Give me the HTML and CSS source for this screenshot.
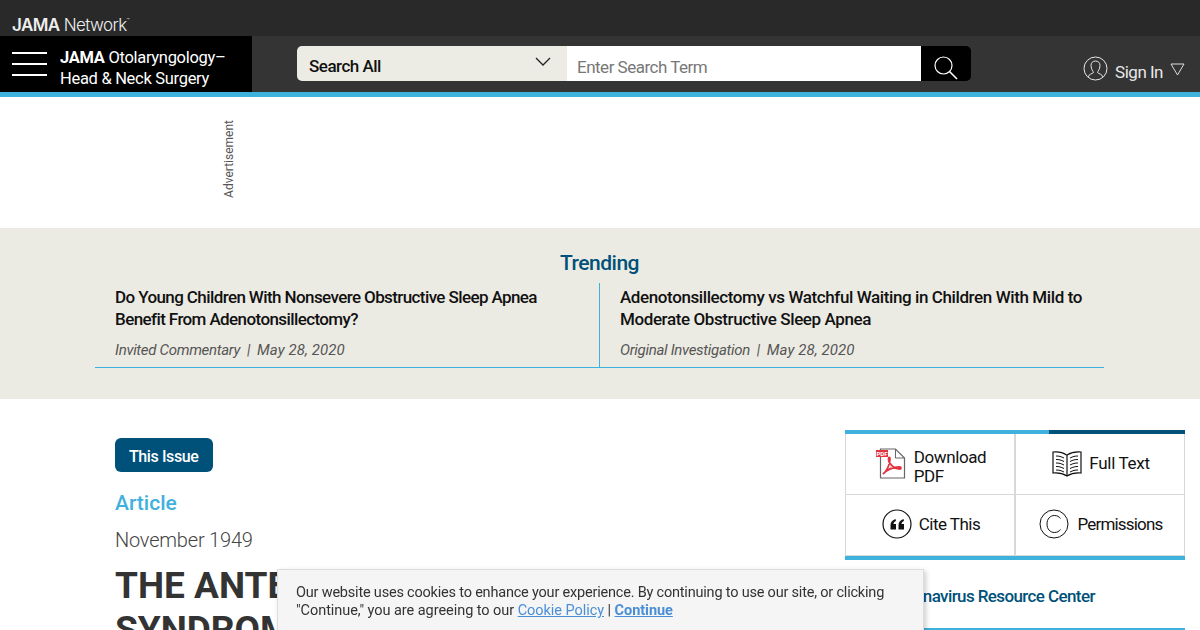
FILE: index.html
```html
<!DOCTYPE html>
<html lang="en">

<head>
    <meta charset="UTF-8">
    <meta name="viewport" content="width=device-width, initial-scale=1.0">
    <title>The Anterior Syndrome</title>
    <link rel="stylesheet" href="styles.css">
</head>

<body>
    <div class="network-bar">
        <div class="network-logo"><b>JAMA</b> Network<sup>™</sup></div>
    </div>

    <header class="site-header">
        <div class="journal">
            <div class="burger"><span></span><span></span><span></span></div>
            <div class="journal-name"><b>JAMA</b> Otolaryngology–<br>Head &amp; Neck Surgery</div>
        </div>
        <form class="search">
            <div class="search-select">
                <span>Search All</span>
                <svg width="16" height="10" viewBox="0 0 16 10"><path d="M1 1l7 7 7-7" fill="none" stroke="#222" stroke-width="1.3"/></svg>
            </div>
            <div class="search-input">Enter Search Term</div>
            <div class="search-btn">
                <svg width="24" height="24" viewBox="0 0 24 24" fill="none" stroke="#fff" stroke-width="1.2"><circle cx="9.5" cy="9.5" r="8.5"/><path d="M15.5 15.5l7.5 7.5" stroke-width="1.6"/></svg>
            </div>
        </form>
        <div class="sign-in">
            <svg width="25" height="25" viewBox="0 0 25 25" fill="none" stroke="#e8e8e8" stroke-width="1"><circle cx="12.5" cy="12.5" r="11.5"/><path d="M5 21c1-3 4-3 5.500-4.500 0-1-2.500-3-2.500-7 0-3 2-4.500 4.500-4.500s4.500 1.500 4.500 4.500c0 4-2.500 6-2.500 7 1.500 1.500 4.500 1.500 5.500 4.500"/></svg>
            <span>Sign In</span>
            <svg class="caret" width="15" height="13" viewBox="0 0 15 13" fill="none" stroke="#ddd" stroke-width="1"><path d="M1 1h13L7.500 12z"/></svg>
        </div>
    </header>

    <div class="ad-strip">
        <div class="ad-label">Advertisement</div>
    </div>

    <section class="trending">
        <h2>Trending</h2>
        <div class="trending-list">
            <div class="trending-item">
                <a href="#">Do Young Children With Nonsevere Obstructive Sleep Apnea Benefit From Adenotonsillectomy?</a>
                <p>Invited Commentary &nbsp;|&nbsp; <time>May 28, 2020</time></p>
            </div>
            <div class="trending-item">
                <a href="#">Adenotonsillectomy vs Watchful Waiting in Children With Mild to Moderate Obstructive Sleep Apnea</a>
                <p>Original Investigation &nbsp;|&nbsp; <time>May 28, 2020</time></p>
            </div>
        </div>
    </section>

    <main class="content">
        <article class="article">
            <a class="issue-btn" href="#">This Issue</a>
            <div class="article-type">Article</div>
            <div class="article-date">November 1949</div>
            <h1>THE ANTERIOR<br>SYNDROME</h1>
        </article>

        <aside class="sidebar">
            <div class="tools">
                <a class="tool tool-pdf" href="#">
                    <svg width="30" height="31" viewBox="0 0 30 31">
                        <path d="M4.500 1h15l9 9v20h-24z" fill="#fff" stroke="#666" stroke-width="1.200"/>
                        <path d="M19.500 1v9h9" fill="none" stroke="#666" stroke-width="1"/>
                        <rect x="0" y="2" width="12" height="7" fill="#e2333f"/>
                        <text class="pdf-tag" x="6" y="7.500" text-anchor="middle">PDF</text>
                        <path d="M7 26c4-3 7-10 7-15 0-2-1.500-2-1.500 0 0 5 6 10 11 10 2 0 2-2 0-2-5 0-12 2-16.500 7z" fill="none" stroke="#e2333f" stroke-width="1.800"/>
                    </svg>
                    <span>Download<br>PDF</span>
                </a>
                <a class="tool" href="#">
                    <svg width="30" height="27" viewBox="0 0 30 27" fill="none" stroke="#111" stroke-width="1.200">
                        <path d="M14.500 5C11 2.500 6 1.500 1 2v21c5-.5 10 .5 14 3 4-2.500 9-3.500 14-3V2c-5-.5-10 .5-14 3v21"/>
                        <path d="M4 6c3 0 5 .5 8 2M4 9.500c3 0 5 .5 8 2M4 13c3 0 5 .5 8 2M4 16.500c3 0 5 .5 8 2M4 20c3 0 5 .5 8 2M26 6c-3 0-5 .5-8 2M26 9.500c-3 0-5 .5-8 2M26 13c-3 0-5 .5-8 2M26 16.500c-3 0-5 .5-8 2M26 20c-3 0-5 .5-8 2" stroke-width="1"/>
                    </svg>
                    <span>Full Text</span>
                </a>
                <a class="tool tool-cite" href="#">
                    <svg width="30" height="30" viewBox="0 0 30 30">
                        <circle cx="15" cy="15" r="14" fill="none" stroke="#111" stroke-width="1.200"/>
                        <path d="M13.500 10c-3 1-5 3-5 6v4.500h5.500V15h-2.500c0-1.500 1-2.500 2.500-3zM21.500 10c-3 1-5 3-5 6v4.500H22V15h-2.500c0-1.500 1-2.500 2.500-3z" fill="#111"/>
                    </svg>
                    <span>Cite This</span>
                </a>
                <a class="tool tool-wide" href="#">
                    <svg width="30" height="30" viewBox="0 0 30 30" fill="none" stroke="#111" stroke-width="1">
                        <circle cx="15" cy="15" r="14"/>
                        <path d="M21.500 9.500C20 7.500 18 6.500 15.500 6.500c-4.500 0-7.500 3.500-7.500 8.500s3 8.500 7.500 8.500c2.500 0 4.500-1 6-3"/>
                    </svg>
                    <span>Permissions</span>
                </a>
            </div>
            <a class="resource-link" href="#">Coronavirus Resource Center</a>
        </aside>
    </main>

    <div class="cookie-notice">
        Our website uses cookies to enhance your experience. By continuing to use our site, or clicking <span class="cookie-line">"Continue," you are agreeing to our <a href="#">Cookie Policy</a> | <a class="cookie-continue" href="#">Continue</a></span>
    </div>
</body>

</html>
```

FILE: styles.css
```css
html,
body {
    height: 630px;
    overflow: hidden;
}

body {
    margin: 0;
    font-family: Roboto, sans-serif;
    background-color: #fff;
    color: #111;
}

a {
    color: inherit;
    text-decoration: none;
}

.network-bar {
    height: 36px;
    background-color: #292929;
    display: flex;
    align-items: flex-end;
    padding-left: 12px;
}

.network-logo {
    font-family: Inter, sans-serif;
    font-size: 17px;
    line-height: 18px;
    font-weight: 300;
    letter-spacing: -0.6px;
    color: #eee;
    padding-bottom: 2px;
}

.network-logo b {
    font-weight: 600;
}

.network-logo sup {
    font-size: 5px;
    vertical-align: 9px;
    line-height: 0;
}

.site-header {
    height: 56px;
    display: flex;
    background-color: #343434;
    border-bottom: 5px solid #3eb1dd;
}

.journal {
    width: 252px;
    background-color: #000;
    color: #fff;
    display: flex;
    align-items: center;
    padding-left: 12px;
    box-sizing: border-box;
    gap: 13px;
}

.burger {
    width: 35px;
    display: flex;
    flex-direction: column;
    gap: 9px;
}

.burger span {
    height: 2px;
    background-color: #fff;
}

.journal-name {
    padding-top: 7px;
    font-size: 16.500px;
    line-height: 21px;
    letter-spacing: -0.3px;
}

.search {
    display: flex;
    width: 674px;
    height: 35px;
    margin: 10px 0 0 45px;
}

.search-select {
    width: 270px;
    box-sizing: border-box;
    padding: 5px 16px 0 12px;
    display: flex;
    align-items: center;
    justify-content: space-between;
    background-color: #edece4;
    border-radius: 5px 0 0 5px;
    font-size: 17px;
    font-weight: 500;
    letter-spacing: -0.5px;
}

.search-select svg {
    margin-top: -8px;
}

.search-input {
    flex: 1;
    padding: 4px 0 0 10px;
    background-color: #fff;
    color: #777;
    font-size: 17px;
    line-height: 35px;
    letter-spacing: -0.5px;
}

.search-btn {
    width: 50px;
    background-color: #000;
    border-radius: 0 5px 5px 0;
    display: flex;
    align-items: center;
    justify-content: center;
    padding-top: 9px;
    box-sizing: border-box;
}

.sign-in {
    margin-left: auto;
    padding: 20px 15px 0 0;
    display: flex;
    align-items: flex-start;
    color: #e8e8e8;
    font-size: 17px;
    letter-spacing: -0.5px;
}

.sign-in span {
    margin: 6px 7px 0 7px;
}

.sign-in .caret {
    margin-top: 7px;
}

.ad-strip {
    height: 131px;
    display: flex;
    align-items: flex-start;
    padding-left: 222px;
}

.ad-label {
    margin-top: 23px;
    writing-mode: vertical-rl;
    transform: rotate(180deg);
    font-size: 12px;
    line-height: 14px;
    color: #555;
}

.trending {
    height: 171px;
    box-sizing: border-box;
    background-color: #ecebe3;
    padding: 21px 96px 0 95px;
}

.trending h2 {
    margin: 0;
    text-align: center;
    color: #00517a;
    font-size: 21px;
    line-height: 28px;
    font-weight: 500;
    letter-spacing: -0.5px;
}

.trending-list {
    margin-top: 6px;
    display: flex;
    border-bottom: 1px solid #3eb1dd;
}

.trending-item {
    flex: 1;
    height: 84px;
    box-sizing: border-box;
    padding: 3px 20px 0;
}

.trending-item:first-child {
    border-right: 1px solid #3eb1dd;
}

.trending-item a {
    display: block;
    font-size: 17px;
    line-height: 22px;
    font-weight: 500;
    letter-spacing: -0.6px;
    color: #111;
}

.trending-item:last-child a {
    letter-spacing: -0.4px;
}

.trending-item p {
    margin: 10px 0 0;
    font-size: 15px;
    line-height: 20px;
    font-style: italic;
    letter-spacing: -0.3px;
    color: #555;
}

.trending-item time {
    letter-spacing: 0.1px;
}

.content {
    display: flex;
    justify-content: space-between;
    padding: 31px 15px 0 115px;
}

.issue-btn {
    display: inline-block;
    margin-top: 8px;
    padding: 0 15px 0 14px;
    height: 34px;
    line-height: 38px;
    background-color: #00517a;
    color: #fff;
    border-radius: 6px;
    font-size: 16px;
    font-weight: 500;
    letter-spacing: -0.4px;
}

.article-type {
    margin-top: 16px;
    color: #3eb1dd;
    font-size: 21px;
    line-height: 30px;
    font-weight: 500;
}

.article-date {
    margin-top: 8px;
    color: #444;
    font-size: 20px;
    line-height: 28px;
    font-weight: 300;
    letter-spacing: -0.2px;
}

.article h1 {
    margin: 10px 0 0;
    color: #333;
    font-size: 37px;
    line-height: 44px;
    font-weight: 700;
}

.sidebar {
    width: 340px;
}

.tools {
    display: grid;
    grid-template-columns: 171px 169px;
    grid-template-rows: 61px 61px;
    background-image: linear-gradient(to right, #3eb1dd 60%, #00517a 60%);
    background-size: 100% 4px;
    background-repeat: no-repeat;
    border-top: 4px solid transparent;
    border-bottom: 4px solid #3eb1dd;
    background-origin: border-box;
}

.tool {
    display: flex;
    align-items: center;
    justify-content: center;
    gap: 7px;
    padding: 0 0 2px 2px;
    border: 1px solid #d8d8d8;
    border-top: 0;
    font-size: 17px;
    line-height: 19px;
    letter-spacing: -0.3px;
}

.tool:nth-child(odd) {
    border-right-width: 2px;
}

.tool:nth-child(even) {
    border-left: 0;
}

.tool-pdf {
    gap: 8px;
    letter-spacing: -0.4px;
}

.tool-pdf span {
    padding-top: 8px;
}

.tool-cite {
    letter-spacing: -0.5px;
}

.tool-wide {
    gap: 8px;
    letter-spacing: -0.8px;
}

.pdf-tag {
    font-size: 6px;
    font-weight: 700;
    letter-spacing: 0;
    fill: #fff;
}

.resource-link {
    display: block;
    padding: 25px 0 0 44px;
    height: 43px;
    color: #00517a;
    font-size: 17px;
    line-height: 22px;
    font-weight: 500;
    letter-spacing: -0.6px;
    border-bottom: 2px solid #3eb1dd;
}

.cookie-notice {
    position: fixed;
    left: 277px;
    top: 569px;
    width: 609px;
    height: 90px;
    padding: 14px 18px;
    background-color: #f5f5f5;
    border: 1px solid #ddd;
    box-shadow: 2px 2px 5px rgba(0, 0, 0, 0.2);
    color: #333;
    font-size: 14.500px;
    line-height: 18px;
    letter-spacing: -0.2px;
}

.cookie-line {
    letter-spacing: -0.05px;
}

.cookie-notice a {
    color: #4a8fd6;
    text-decoration: underline;
}

.cookie-notice .cookie-continue {
    font-weight: 700;
}
```
